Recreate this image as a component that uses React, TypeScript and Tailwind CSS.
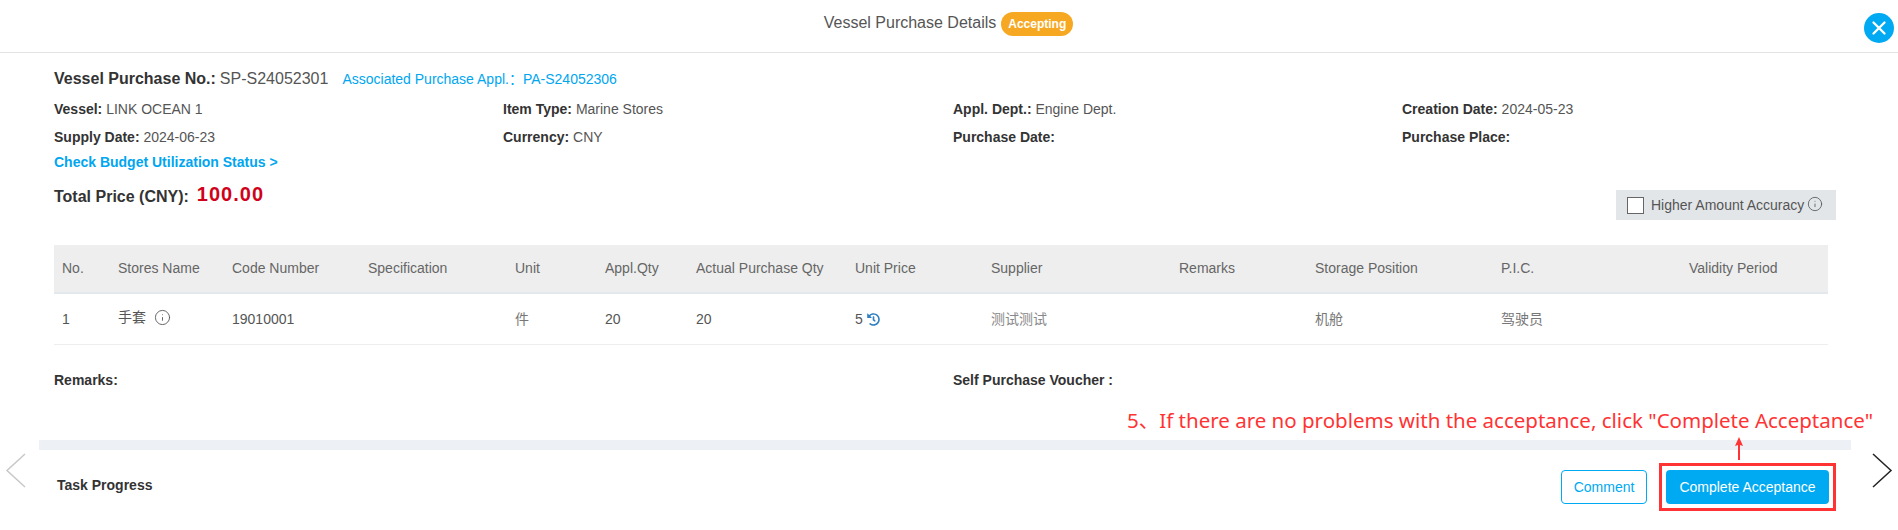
import React from 'react';
import { Info, X } from 'lucide-react';
import { FaHistory } from 'react-icons/fa';

const Field = ({ label, value }: { label: string; value?: string }) => (
  <div className="text-[14px] leading-[28px] text-[#555] whitespace-nowrap">
    <span className="font-bold text-[#333]">{label}:</span> {value}
  </div>
);

const headers = ['No.', 'Stores Name', 'Code Number', 'Specification', 'Unit', 'Appl.Qty', 'Actual Purchase Qty', 'Unit Price', 'Supplier', 'Remarks', 'Storage Position', 'P.I.C.', 'Validity Period'];

const gridCols = 'grid grid-cols-[56px_114px_136px_147px_90px_91px_159px_136px_188px_136px_186px_188px_1fr] pl-2 items-center';

export default function App() {
  return (
    <div className="relative h-[530px] bg-white overflow-hidden font-['Liberation_Sans','Noto_Sans_CJK_SC',sans-serif] text-[#555]">
      {/* Header */}
      <div className="h-[53px] border-b border-[#e4e4e4] flex justify-center pt-3 pr-[1px]">
        <div className="flex items-start gap-[5px]">
          <span className="text-[16px] leading-[22px] text-[#555]">Vessel Purchase Details</span>
          <span className="h-6 w-[72px] rounded-full bg-[#f7a823] text-white text-xs font-bold flex items-center justify-center">Accepting</span>
        </div>
      </div>
      <button className="absolute left-[1864px] top-[13px] w-[30px] h-[30px] rounded-full bg-[#00aaf2] text-white flex items-center justify-center">
        <X size={22} strokeWidth={2.5} />
      </button>

      <svg className="absolute left-[5px] top-[452px]" width="22" height="37" viewBox="0 0 22 37" fill="none">
        <path d="M20 2 L2 18.5 L20 35" stroke="#c8c8c8" strokeWidth="1.5" />
      </svg>
      <svg className="absolute left-[1871px] top-[452px]" width="22" height="37" viewBox="0 0 22 37" fill="none">
        <path d="M2 2 L20 18.5 L2 35" stroke="#222" strokeWidth="1.5" />
      </svg>

      {/* Body */}
      <div className="pl-[54px] pr-[70px]">
        <div className="flex items-baseline mt-[16px] h-[20px] leading-[20px] whitespace-nowrap">
          <span className="text-[16px] font-bold text-[#333]">Vessel Purchase No.:</span>
          <span className="text-[16px] text-[#555] ml-1">SP-S24052301</span>
          <span className="text-[14px] text-[#00a6f0] ml-[14px]">Associated Purchase Appl.：</span>
          <span className="text-[14px] text-[#00a6f0]">PA-S24052306</span>
        </div>
        <div className="grid grid-cols-[449px_450px_449px_1fr] mt-[6px]">
          <Field label="Vessel" value="LINK OCEAN 1" />
          <Field label="Item Type" value="Marine Stores" />
          <Field label="Appl. Dept." value="Engine Dept." />
          <Field label="Creation Date" value="2024-05-23" />
          <Field label="Supply Date" value="2024-06-23" />
          <Field label="Currency" value="CNY" />
          <Field label="Purchase Date" />
          <Field label="Purchase Place" />
        </div>
        <div className="text-[14px] font-bold text-[#00a6f0] leading-[20px] mt-[1px]">Check Budget Utilization Status &gt;</div>
        <div className="flex items-start justify-between">
          <div className="flex items-center gap-[8px] mt-[11px] h-6">
            <span className="text-[16px] font-bold text-[#333] mt-[4px]">Total Price (CNY):</span>
            <span className="text-[20px] font-bold tracking-[1px] text-[#d0021b] -mt-[3px]">100.00</span>
          </div>
          <div className="w-[220px] h-[30px] bg-[#e3e6e9] flex items-center pl-[11px] mt-[18px] -mr-2 text-[14px] text-[#555]">
            <span className="w-[17px] h-[17px] bg-white border border-[#666] mr-[7px]" />
            Higher Amount Accuracy
            <Info size={16} strokeWidth={1.25} className="ml-[3px] -mt-[2px]" />
          </div>
        </div>

        {/* Table */}
        <div className={`${gridCols} mt-[25px] h-[49px] bg-[#eeeeee] border-b-2 border-[#e3e8ec] text-[14px] text-[#666]`}>
          {headers.map((h) => (
            <div key={h} className="whitespace-nowrap">{h}</div>
          ))}
        </div>
        <div className={`${gridCols} h-[51px] border-b border-[#eeeeee] text-[14px] text-[#555]`}>
          <div>1</div>
          <div className="flex items-center gap-[8px] -mt-1">手套<Info size={17} strokeWidth={1.25} /></div>
          <div>19010001</div>
          <div />
          <div className="text-[#777]">件</div>
          <div>20</div>
          <div>20</div>
          <div className="flex items-center gap-[4px]">5<FaHistory size={13} className="text-[#2f7fc1]" /></div>
          <div className="text-[#888]">测试测试</div>
          <div />
          <div className="text-[#777]">机舱</div>
          <div className="text-[#777]">驾驶员</div>
          <div />
        </div>

        <div className="grid grid-cols-[899px_1fr] mt-[25px] text-[14px] font-bold text-[#333] leading-5">
          <div>Remarks:</div>
          <div>Self Purchase Voucher :</div>
        </div>
      </div>

      {/* Footer */}
      <div className="ml-[39px] w-[1812px] h-[10px] bg-[#edf0f5] mt-[50px]" />
      <div className="flex items-center justify-between pl-[57px] pr-[69px] pt-[20px]">
        <span className="text-[14px] font-bold text-[#333] mb-1">Task Progress</span>
        <div className="flex gap-[19px]">
          <button className="w-[86px] h-[34px] rounded border border-[#00aaf2] text-[#00aaf2] text-[14px]">Comment</button>
          <button className="w-[163px] h-[34px] rounded bg-[#00aaf2] text-white text-[14px]">Complete Acceptance</button>
        </div>
      </div>

      {/* Annotation */}
      <div className="absolute left-[1127px] top-[406px] text-[20.5px] leading-[28px] text-[#ff3333] font-['Noto_Sans','Noto_Sans_CJK_SC',sans-serif] whitespace-nowrap">
        5、If there are no problems with the acceptance, click "Complete Acceptance"
      </div>
      <div className="absolute left-[1659px] top-[463px] w-[177px] h-[48px] border-[3px] border-[#ff3333]" />
      <svg className="absolute left-[1733px] top-[436px]" width="12" height="24" viewBox="0 0 12 24">
        <path d="M6 1 L10 10 L7 9 L7 24 L5 24 L5 9 L2 10 Z" fill="#ff3333" />
      </svg>
    </div>
  );
}
